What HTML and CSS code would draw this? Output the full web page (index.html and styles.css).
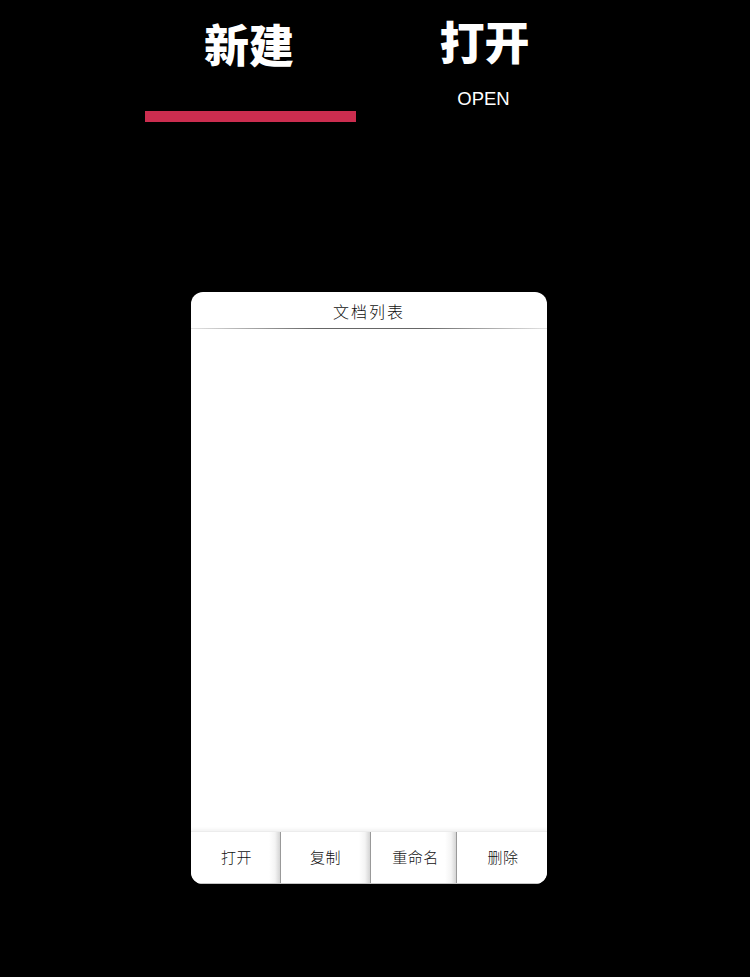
FILE: index.html
```html
<!DOCTYPE html>
<html lang="zh">
<head>
<meta charset="utf-8">
<title>文档列表</title>
<link rel="stylesheet" href="styles.css">
</head>
<body>
<header class="tabs">
  <div class="tab tab-active">
    <div class="tab-title">新建</div>
    <div class="tab-bar"></div>
  </div>
  <div class="tab">
    <div class="tab-title tab-title-raised">打开</div>
    <div class="tab-sub">OPEN</div>
  </div>
</header>
<main class="panel">
  <h1 class="panel-title">文档列表</h1>
  <div class="panel-rule"></div>
  <div class="panel-body"></div>
  <footer class="actions">
    <button class="action action-a">打开</button>
    <button class="action action-b">复制</button>
    <button class="action action-c">重命名</button>
    <button class="action action-d">删除</button>
  </footer>
</main>
</body>
</html>
```
FILE: styles.css
```css
* { box-sizing: border-box; }
html, body { margin: 0; padding: 0; }
body {
  width: 750px;
  height: 977px;
  background: #000;
  font-family: "Noto Sans CJK SC", "Liberation Sans", sans-serif;
  overflow: hidden;
}
.tabs {
  display: flex;
  gap: 23px;
  height: 122px;
  padding-left: 145px;
}
.tab {
  width: 211px;
  display: flex;
  flex-direction: column;
  align-items: center;
}
.tab-title {
  height: 91px;
  padding-top: 11px;
  padding-right: 3px;
  color: #fff;
  font-size: 45px;
  font-weight: 900;
  line-height: 65px;
  white-space: nowrap;
}
.tab-title-raised { height: 88px; padding-top: 8px; padding-right: 0; }
.tab-bar {
  width: 211px;
  height: 11px;
  margin-top: 20px;
  background: #cb2d4f;
}
.tab-sub {
  color: #fff;
  font-family: "Liberation Sans", sans-serif;
  font-size: 18.5px;
  line-height: 22px;
  padding-right: 2px;
}
.panel {
  width: 356px;
  height: 592px;
  margin: 170px 0 0 191px;
  background: #fff;
  border-radius: 12px;
  display: flex;
  flex-direction: column;
  overflow: hidden;
}
.panel-title {
  margin: 0;
  height: 36px;
  padding-top: 1px;
  color: #111;
  font-size: 16px;
  font-weight: 300;
  letter-spacing: 2px;
  line-height: 37px;
  text-align: center;
}
.panel-rule {
  height: 1px;
  background: linear-gradient(90deg, #e4e4e4 0%, #666 35%, #666 65%, #e4e4e4 100%);
}
.panel-body { flex: 1; }
.actions {
  display: grid;
  grid-template-columns: 90px 90px 86px 90px;
  height: 53px;
  border-top: 1px solid #ececec;
  border-bottom: 1px solid #c4c4c4;
  box-shadow: 0 -2px 3px rgba(0, 0, 0, 0.05);
}
.action {
  border: 0;
  padding: 0 0 1px 0;
  background: #fff;
  color: #111;
  font-family: inherit;
  font-size: 15px;
  font-weight: 300;
  letter-spacing: 0.5px;
  line-height: 48px;
  text-align: center;
}
.action-a, .action-b, .action-c {
  border-right: 1px solid #999;
  background: linear-gradient(270deg, #d4d4d4 0, #f4f4f4 5px, #fff 11px);
}
.action-a { padding-left: 2px; }
.action-c { padding-left: 4px; }
.action-d { padding-left: 2px; }
```
